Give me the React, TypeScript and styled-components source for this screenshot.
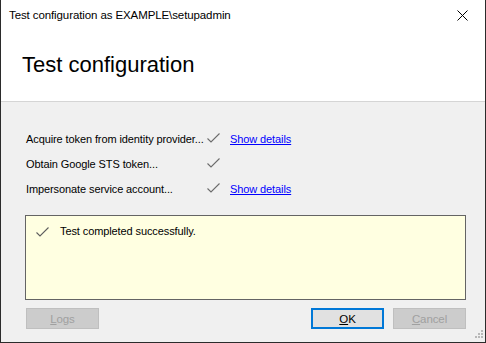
import React from 'react';
import styled, { createGlobalStyle } from 'styled-components';

const GlobalStyle = createGlobalStyle`
  html, body {
    margin: 0;
    padding: 0;
    background: #ffffff;
  }
  body {
    font-family: 'Liberation Sans', Arial, sans-serif;
    font-size: 11px;
    letter-spacing: -0.1px;
    color: #000000;
  }
`;

type Step = {
  label: string;
  hasDetails: boolean;
};

const steps: Step[] = [
  { label: 'Acquire token from identity provider...', hasDetails: true },
  { label: 'Obtain Google STS token...', hasDetails: false },
  { label: 'Impersonate service account...', hasDetails: true },
];

const CheckIcon = ({ color = '#6b6b6b' }: { color?: string }) => (
  <svg width="13" height="10" viewBox="0 0 13 10">
    <polyline points="0.5,5.5 4,9 12.5,0.5" fill="none" stroke={color} strokeWidth="1.1" />
  </svg>
);

const CloseIcon = () => (
  <svg width="11" height="11" viewBox="0 0 11 11">
    <path d="M0.5 0.5 L10.5 10.5 M10.5 0.5 L0.5 10.5" stroke="#000" strokeWidth="1" />
  </svg>
);

const SizeGrip = () => (
  <GripSvg width="10" height="10" viewBox="0 0 10 10">
    {[
      [8, 0],
      [5, 3],
      [8, 3],
      [2, 6],
      [5, 6],
      [8, 6],
    ].map(([x, y]) => (
      <rect key={`${x}-${y}`} x={x} y={y} width="2" height="2" fill="#b8b8b8" />
    ))}
  </GripSvg>
);

export default function App() {
  return (
    <>
      <GlobalStyle />
      <Window>
        <TitleBar>
          <TitleText>Test configuration as EXAMPLE\setupadmin</TitleText>
          <CloseButton>
            <CloseIcon />
          </CloseButton>
        </TitleBar>
        <Header>
          <Heading>Test configuration</Heading>
        </Header>
        <Body>
          <StepList>
            {steps.map((step) => (
              <StepRow key={step.label}>
                <StepLabel>{step.label}</StepLabel>
                <StepStatus>
                  <CheckIcon />
                </StepStatus>
                {step.hasDetails && <DetailsLink>Show details</DetailsLink>}
              </StepRow>
            ))}
          </StepList>
          <ResultBox>
            <ResultLine>
              <CheckIcon color="#5e5e5e" />
              <span>Test completed successfully.</span>
            </ResultLine>
          </ResultBox>
          <ButtonRow>
            <Button disabled>
              <u>L</u>ogs
            </Button>
            <Spacer />
            <Button $primary>
              <u>O</u>K
            </Button>
            <Button disabled>
              <u>C</u>ancel
            </Button>
          </ButtonRow>
          <SizeGrip />
        </Body>
      </Window>
    </>
  );
}

const Window = styled.div`
  position: relative;
  width: 486px;
  height: 343px;
  box-sizing: border-box;
  border: 1px solid #2b2b2b;
  border-top: none;
  display: flex;
  flex-direction: column;
  background: #f0f0f0;
  overflow: hidden;
`;

const TitleBar = styled.div`
  height: 31px;
  flex: none;
  display: flex;
  align-items: center;
  background: #ffffff;
  padding-left: 8px;
`;

const TitleText = styled.div`
  flex: 1;
  font-size: 11.5px;
  color: #000000;
  padding-bottom: 1px;
`;

const CloseButton = styled.div`
  width: 46px;
  height: 31px;
  display: flex;
  align-items: center;
  justify-content: center;
  padding-left: 1px;
`;

const Header = styled.div`
  height: 70px;
  flex: none;
  background: #ffffff;
  border-bottom: 1px solid #d5d5d5;
  display: flex;
  align-items: center;
  padding-left: 21px;
`;

const Heading = styled.h1`
  margin: 0;
  font-family: 'Liberation Sans', Arial, sans-serif;
  font-weight: normal;
  font-size: 22px;
  letter-spacing: 0;
  color: #000000;
  padding-bottom: 2px;
`;

const Body = styled.div`
  flex: 1;
  display: flex;
  flex-direction: column;
  padding: 29px 19px 0 24px;
`;

const StepList = styled.div`
  display: flex;
  flex-direction: column;
  gap: 9px;
`;

const StepRow = styled.div`
  display: flex;
  align-items: center;
  height: 16px;
`;

const StepLabel = styled.span`
  width: 181px;
  padding-left: 1px;
  white-space: nowrap;
`;

const StepStatus = styled.span`
  width: 23px;
  display: flex;
  align-items: center;
  padding-bottom: 2px;
`;

const DetailsLink = styled.a`
  color: #0000ff;
  text-decoration: underline;
  cursor: pointer;
  font-size: 11px;
`;

const ResultBox = styled.div`
  margin-top: 18px;
  height: 85px;
  box-sizing: border-box;
  border: 1px solid #646464;
  background: #ffffe1;
  padding: 8px 10px;
`;

const ResultLine = styled.div`
  display: flex;
  align-items: center;
  gap: 11px;
  svg {
    margin-top: 3px;
  }
`;

const ButtonRow = styled.div`
  display: flex;
  align-items: center;
  gap: 9px;
  margin-top: 8px;
`;

const Spacer = styled.div`
  flex: 1;
`;

const Button = styled.button<{ $primary?: boolean }>`
  width: 73px;
  height: 21px;
  box-sizing: border-box;
  font-family: 'Liberation Sans', Arial, sans-serif;
  font-size: 11.5px;
  letter-spacing: -0.1px;
  padding: 0;
  margin: 0;
  border: ${({ $primary }) => ($primary ? '2px solid #0078d7' : '1px solid #bfbfbf')};
  background: ${({ $primary }) => ($primary ? '#e1e1e1' : '#cccccc')};
  color: ${({ $primary }) => ($primary ? '#000000' : '#a0a0a0')};
  &:first-child {
    margin-left: 1px;
  }
  u {
    text-decoration: underline;
  }
`;

const GripSvg = styled.svg`
  position: absolute;
  right: 2px;
  bottom: 2px;
`;
